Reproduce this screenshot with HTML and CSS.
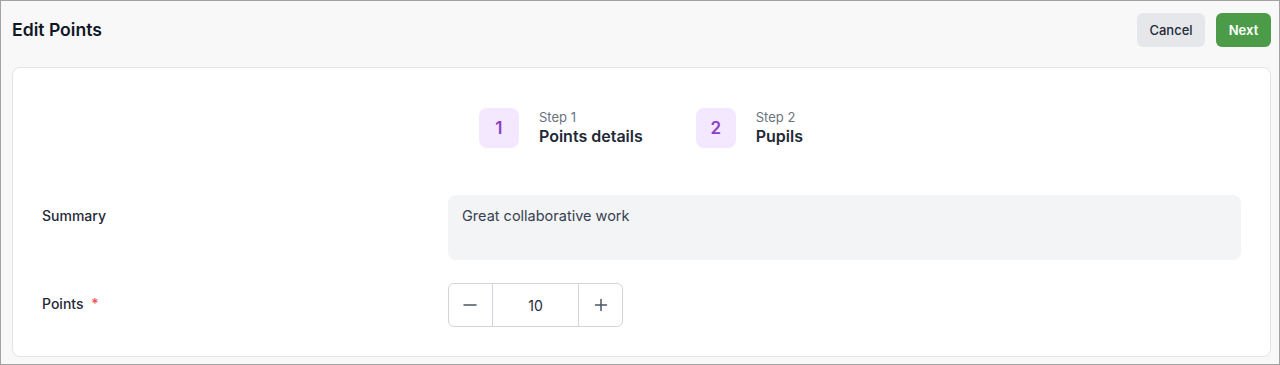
FILE: index.html
```html
<!DOCTYPE html>
<html>
<head>
<meta charset="utf-8">
<link rel="stylesheet" href="styles.css">
</head>
<body>
<div class="frame">
  <header class="topbar">
    <h1 class="title">Edit Points</h1>
    <div class="actions">
      <button class="btn btn-cancel">Cancel</button>
      <button class="btn btn-next">Next</button>
    </div>
  </header>
  <section class="card">
    <div class="steps">
      <div class="step">
        <div class="step-num">1</div>
        <div class="step-text">
          <div class="step-label">Step 1</div>
          <div class="step-name">Points details</div>
        </div>
      </div>
      <div class="step">
        <div class="step-num">2</div>
        <div class="step-text">
          <div class="step-label">Step 2</div>
          <div class="step-name">Pupils</div>
        </div>
      </div>
    </div>
    <div class="form">
      <div class="row">
        <div class="label label-summary">Summary</div>
        <div class="textarea">Great collaborative work</div>
      </div>
      <div class="row row-points">
        <div class="label">Points <span class="req">*</span></div>
        <div class="stepper">
          <div class="step-btn">
            <svg width="14" height="14" viewBox="0 0 14 14"><path d="M1 7h12" stroke="#4b5563" stroke-width="1.5" stroke-linecap="round"/></svg>
          </div>
          <div class="step-val">10</div>
          <div class="step-btn">
            <svg width="14" height="14" viewBox="0 0 14 14"><path d="M1.5 7h11M7 1.5v11" stroke="#4b5563" stroke-width="1.5" stroke-linecap="round"/></svg>
          </div>
        </div>
      </div>
    </div>
  </section>
</div>
</body>
</html>
```

FILE: styles.css
```css
* { box-sizing: border-box; }
html, body { margin: 0; padding: 0; }
body {
  font-family: Inter, "Noto Sans", sans-serif;
  color: #1f2937;
}
.frame {
  width: 1280px;
  height: 365px;
  border: 1px solid #a3a3a3;
  background: #f8f8f8;
  display: flex;
  flex-direction: column;
}
.topbar {
  display: flex;
  align-items: center;
  justify-content: space-between;
  padding: 12px 8px 0 11px;
  height: 45px;
}
.title {
  margin: 0;
  font-size: 17.6px;
  font-weight: 600;
  color: #111827;
}
.actions { display: flex; gap: 11px; }
.btn {
  font-family: Inter, "Noto Sans", sans-serif;
  font-size: 13px;
  font-weight: 500;
  height: 34px;
  border: none;
  border-radius: 6px;
  padding: 0;
  cursor: pointer;
}
.btn-cancel { background: #e5e7eb; color: #1f2937; width: 68px; }
.btn-next { background: #4c9b48; color: #fff; font-weight: 600; width: 55px; }
.card {
  margin: 21px 8px 0 11px;
  background: #fff;
  border: 1px solid #e3e4e8;
  border-radius: 8px;
  height: 290px;
  padding: 40px 29px 0 29px;
}
.steps {
  display: flex;
  justify-content: center;
  gap: 53px;
  margin-left: -1px;
}
.step { display: flex; align-items: center; gap: 20px; }
.step-num {
  width: 40px;
  height: 40px;
  border-radius: 8px;
  background: #f3e8ff;
  color: #8b3fc4;
  font-size: 17px;
  font-weight: 600;
  display: flex;
  align-items: center;
  justify-content: center;
}
.step-label { font-size: 13px; color: #6b7280; line-height: 17px; }
.step-name { font-size: 16px; font-weight: 600; color: #1f2937; line-height: 21px; }
.form { margin-top: 47px; display: flex; flex-direction: column; gap: 23px; }
.row { display: grid; grid-template-columns: 406px 1fr; }
.label { font-size: 14px; font-weight: 500; color: #1f2937; padding-top: 12px; }
.row-points { align-items: center; }
.row-points .label { padding-top: 0; margin-top: -3px; }
.req { color: #f05252; margin-left: 4px; }
.textarea {
  background: #f3f4f6;
  border-radius: 8px;
  height: 65px;
  padding: 12px 14px;
  font-size: 14.5px;
  color: #374151;
}
.stepper {
  display: flex;
  width: 175px;
  height: 44px;
  border: 1px solid #d1d5db;
  border-radius: 6px;
}
.step-btn {
  width: 43px;
  display: flex;
  align-items: center;
  justify-content: center;
}
.step-val {
  width: 88px;
  border-left: 1px solid #d1d5db;
  border-right: 1px solid #d1d5db;
  display: flex;
  align-items: center;
  justify-content: center;
  font-size: 14px;
  color: #1f2937;
}
```
